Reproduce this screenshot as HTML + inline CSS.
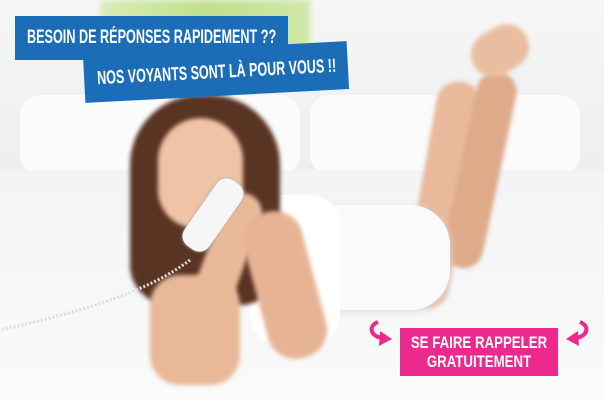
<!DOCTYPE html>
<html><head><style>
body{margin:0;width:604px;height:400px;overflow:hidden;position:relative;background:#f1f2f4;font-family:"Liberation Sans",sans-serif}
.a{position:absolute}
.b{filter:blur(2px)}
.t{color:#fff;font-weight:bold;font-family:"Liberation Sans",sans-serif;white-space:nowrap}
.t span{display:inline-block;transform-origin:left center}
</style></head><body>
<div class="a" style="left:0;top:0;width:604px;height:180px;background:linear-gradient(#f6f6f6,#eceef0)"></div>
<div class="a" style="left:100px;top:0;width:210px;height:48px;background:linear-gradient(90deg,#d8edb8,#bfe08e 50%,#cfe7a8);filter:blur(3px)"></div>
<div class="a" style="left:20px;top:95px;width:280px;height:80px;background:#fbfbfb;border-radius:20px"></div>
<div class="a" style="left:310px;top:95px;width:270px;height:80px;background:#fbfbfb;border-radius:20px"></div>
<div class="a" style="left:0;top:170px;width:604px;height:230px;background:linear-gradient(#f3f4f6,#fafafa)"></div>
<div class="a b" style="left:420px;top:80px;width:45px;height:230px;background:#e8b99a;border-radius:25px;transform:rotate(10deg)"></div>
<div class="a b" style="left:460px;top:70px;width:40px;height:200px;background:#deaa8a;border-radius:22px;transform:rotate(12deg)"></div>
<div class="a b" style="left:470px;top:28px;width:60px;height:45px;background:#e9bea0;border-radius:30px;transform:rotate(-30deg)"></div>
<div class="a" style="left:300px;top:205px;width:150px;height:105px;background:#fafafa;border-radius:40px;box-shadow:0 2px 8px #ddd"></div>
<div class="a" style="left:250px;top:195px;width:90px;height:150px;background:#fff;border-radius:30px"></div>
<div class="a b" style="left:130px;top:95px;width:150px;height:210px;background:#5a3423;border-radius:70px 70px 40px 40px"></div>
<div class="a b" style="left:158px;top:118px;width:85px;height:110px;background:#efc3a6;border-radius:45px 45px 40px 40px"></div>
<div class="a b" style="left:205px;top:190px;width:40px;height:140px;background:#e9b999;border-radius:20px;transform:rotate(20deg)"></div>
<div class="a b" style="left:150px;top:275px;width:90px;height:110px;background:#e8b898;border-radius:30px"></div>
<div class="a b" style="left:255px;top:210px;width:60px;height:150px;background:#e6b494;border-radius:28px;transform:rotate(-15deg)"></div>
<div class="a" style="left:198px;top:175px;width:30px;height:80px;background:#f6f6f6;border-radius:12px;transform:rotate(35deg);box-shadow:0 0 3px #aaa"></div>
<svg class="a" style="left:0;top:250px" width="200" height="90"><path d="M190 10 C150 40 90 60 0 80" stroke="#ddd" stroke-width="3" fill="none" stroke-dasharray="2 2"/></svg>
<div class="a t" style="left:15px;top:16px;width:273px;height:44px;background:#1c6db8;font-size:19px;line-height:44px;padding-left:12px;box-sizing:border-box"><span style="transform:scaleX(0.665)">BESOIN DE RÉPONSES RAPIDEMENT ??</span></div>
<div class="a t" style="left:84px;top:48px;width:264px;height:48px;background:#1c6db8;font-size:19px;line-height:50px;padding-left:13px;box-sizing:border-box;transform:rotate(-3deg)"><span style="transform:scaleX(0.66)">NOS VOYANTS SONT LÀ POUR VOUS !!</span></div>
<div class="a t" style="left:400px;top:328px;width:158px;height:48px;background:#ec2a8e;font-size:17px;line-height:19px;text-align:center"><span style="position:absolute;left:50%;top:5px;transform:translateX(-50%) scaleX(0.78);transform-origin:center">SE FAIRE RAPPELER<br>GRATUITEMENT</span></div>
<svg class="a" style="left:368px;top:318px" width="30" height="30"><path d="M10 4 C0 8 2 18 14 20" stroke="#ec2a8e" stroke-width="4" fill="none"/><path d="M12 13 L24 21 L11 28Z" fill="#ec2a8e"/></svg>
<svg class="a" style="left:562px;top:318px" width="30" height="30"><path d="M18 4 C28 8 26 18 14 20" stroke="#ec2a8e" stroke-width="4" fill="none"/><path d="M16 13 L4 21 L17 28Z" fill="#ec2a8e"/></svg>
</body></html>
